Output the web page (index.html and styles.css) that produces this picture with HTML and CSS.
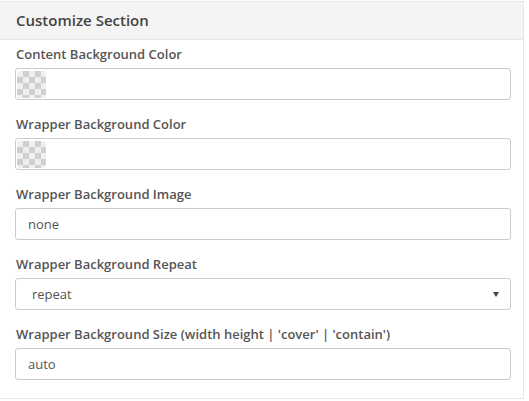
FILE: index.html
```html
<!DOCTYPE html>
<html>
<head>
<meta charset="utf-8">
<link rel="stylesheet" href="styles.css">
</head>
<body>
<div class="panel">
  <div class="panel-head">Customize Section</div>
  <div class="panel-body">
    <div class="field">
      <label class="label">Content Background Color</label>
      <div class="input color-input"><span class="swatch"></span></div>
    </div>
    <div class="field">
      <label class="label">Wrapper Background Color</label>
      <div class="input color-input"><span class="swatch"></span></div>
    </div>
    <div class="field">
      <label class="label">Wrapper Background Image</label>
      <div class="input text-input">none</div>
    </div>
    <div class="field">
      <label class="label">Wrapper Background Repeat</label>
      <div class="input select-input"><span>repeat</span><span class="caret"></span></div>
    </div>
    <div class="field">
      <label class="label">Wrapper Background Size (width height | 'cover' | 'contain')</label>
      <div class="input text-input">auto</div>
    </div>
  </div>
</div>
</body>
</html>
```
FILE: styles.css
```css
html, body {
  margin: 0;
  padding: 0;
  background: #ffffff;
}
body {
  font-family: "Open Sans", "Liberation Sans", sans-serif;
  color: #555;
  padding-top: 1px;
}
.panel {
  width: 524px;
  height: 398px;
  box-sizing: border-box;
  border: 1px solid #e6e6e6;
  border-left: none;
  background: #fff;
}
.panel-head {
  height: 37px;
  background: #f4f4f4;
  border-bottom: 1px solid #e6e6e6;
  font-size: 15px;
  font-weight: 600;
  color: #444;
  padding-left: 16px;
  line-height: 37px;
}
.panel-body {
  padding: 5px 12px 0 15px;
}
.field {
  display: flex;
  flex-direction: column;
  margin-bottom: 15px;
}
.label {
  font-size: 13px;
  font-weight: 600;
  color: #555;
  line-height: 18px;
  padding-left: 1px;
  margin-bottom: 5px;
}
.input {
  height: 32px;
  box-sizing: border-box;
  border: 1px solid #ccc;
  border-radius: 3px;
  display: flex;
  align-items: center;
  font-size: 13px;
  color: #555;
}
.color-input {
  padding-left: 1px;
}
.swatch {
  width: 29px;
  height: 27px;
  border-radius: 3px;
  background-color: #efefef;
  background-image:
    linear-gradient(45deg, #cfcfcf 25%, transparent 25%, transparent 75%, #cfcfcf 75%),
    linear-gradient(45deg, #cfcfcf 25%, transparent 25%, transparent 75%, #cfcfcf 75%);
  background-size: 12px 12px;
  background-position: 0 0, 6px 6px;
}
.text-input {
  padding-left: 12px;
}
.select-input {
  padding-left: 16px;
  padding-right: 11px;
  justify-content: space-between;
}
.caret {
  width: 0;
  height: 0;
  border-left: 3.5px solid transparent;
  border-right: 3.5px solid transparent;
  border-top: 5px solid #444;
}
```
